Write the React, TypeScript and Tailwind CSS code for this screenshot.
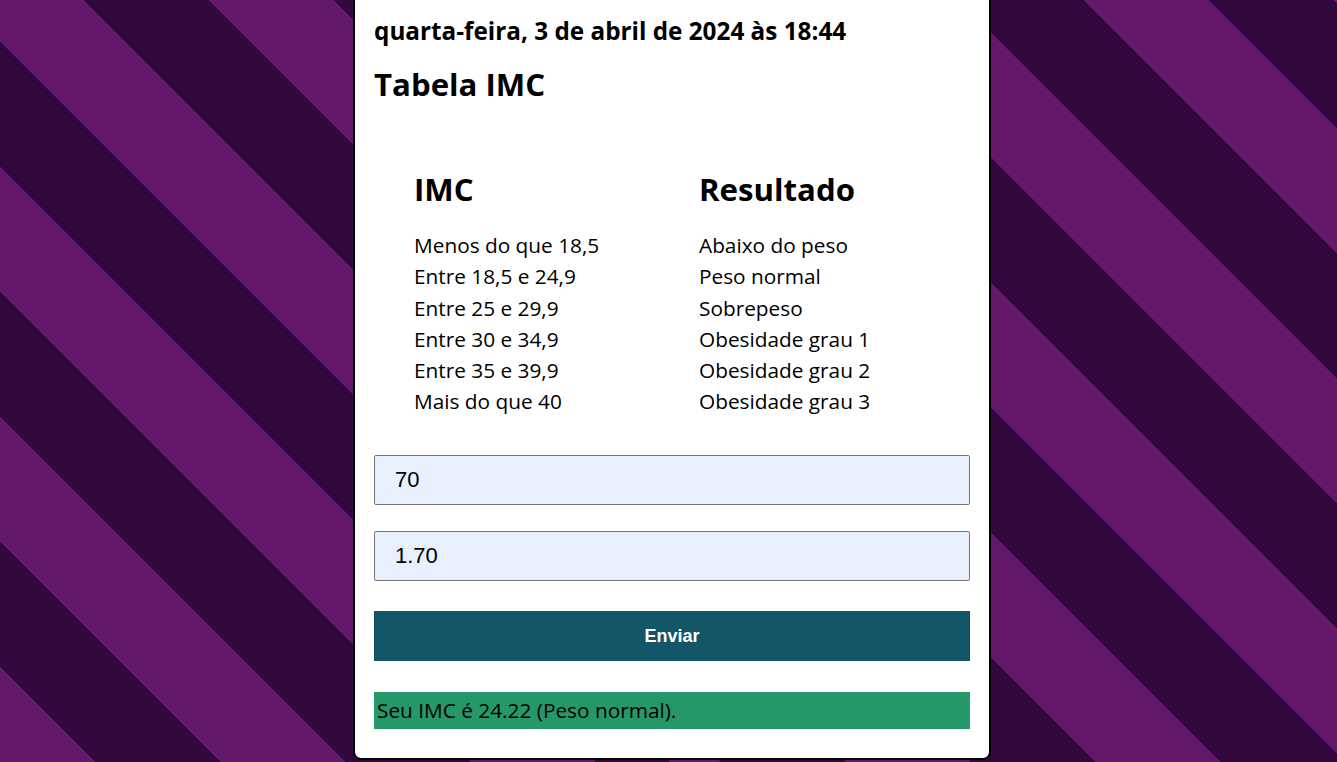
import { useState } from 'react';

type IFaixa = {
	imc: string;
	resultado: string;
};

const faixas: IFaixa[] = [
	{ imc: 'Menos do que 18,5', resultado: 'Abaixo do peso' },
	{ imc: 'Entre 18,5 e 24,9', resultado: 'Peso normal' },
	{ imc: 'Entre 25 e 29,9', resultado: 'Sobrepeso' },
	{ imc: 'Entre 30 e 34,9', resultado: 'Obesidade grau 1' },
	{ imc: 'Entre 35 e 39,9', resultado: 'Obesidade grau 2' },
	{ imc: 'Mais do que 40', resultado: 'Obesidade grau 3' },
];

const classificar = (imc: number) => {
	if (imc < 18.5) return 'Abaixo do peso';
	if (imc < 25) return 'Peso normal';
	if (imc < 30) return 'Sobrepeso';
	if (imc < 35) return 'Obesidade grau 1';
	if (imc < 40) return 'Obesidade grau 2';
	return 'Obesidade grau 3';
};

const App = () => {
	const [peso, setPeso] = useState('70');
	const [altura, setAltura] = useState('1.70');
	const [resultado, setResultado] = useState('Seu IMC é 24.22 (Peso normal).');

	const calcular = (e: React.FormEvent) => {
		e.preventDefault();
		const p = parseFloat(peso);
		const a = parseFloat(altura);
		if (!p || !a) return;
		const imc = p / (a * a);
		setResultado(`Seu IMC é ${imc.toFixed(2)} (${classificar(imc)}).`);
	};

	return (
		<div className="h-screen overflow-hidden flex justify-center pl-[7px] font-['Open_Sans',sans-serif] text-black [background:repeating-linear-gradient(45deg,#631869_0_67.5px,#30083e_67.5px_155.9px,#631869_155.9px_176.78px)_0_0/669px_100%_no-repeat,repeating-linear-gradient(45deg,#631869_0_36.4px,#30083e_36.4px_124.8px,#631869_124.8px_176.78px)_669px_0/668px_100%_no-repeat]">
			<div className="w-[638px] h-fit -mt-2 bg-white border-2 border-black rounded-lg px-[19px] pt-5 pb-[29px] flex flex-col">
				<p className="text-[24.3px] leading-[33px] font-bold">quarta-feira, 3 de abril de 2024 às 18:44</p>
				<h2 className="mt-4 text-[31.2px] leading-[42.5px] font-bold">Tabela IMC</h2>

				<div className="mt-[62px] pl-10 grid grid-cols-[285px_1fr]">
					<h2 className="text-[31.2px] leading-[42.5px] font-bold">IMC</h2>
					<h2 className="text-[31.2px] leading-[42.5px] font-bold">Resultado</h2>
					<div className="col-span-2 h-5"></div>
					{faixas.map((faixa, key) => (
						<div key={key} className="contents text-[20.8px] leading-[31.25px]">
							<span>{faixa.imc}</span>
							<span>{faixa.resultado}</span>
						</div>
					))}
				</div>

				<form onSubmit={calcular} className="flex flex-col">
					<input
						type="text"
						value={peso}
						onChange={(e) => setPeso(e.target.value)}
						className="mt-[37.5px] h-[50px] w-full bg-[#e8f0fe] border border-[#767676] rounded-[2px] pl-5 font-['Liberation_Sans',Arial,sans-serif] text-[22px] text-black outline-none"
					/>
					<input
						type="text"
						value={altura}
						onChange={(e) => setAltura(e.target.value)}
						className="mt-[26px] h-[50px] w-full bg-[#e8f0fe] border border-[#767676] rounded-[2px] pl-5 font-['Liberation_Sans',Arial,sans-serif] text-[22px] text-black outline-none"
					/>
					<button
						type="submit"
						className="mt-[30px] h-[50px] w-full bg-[#125667] text-white font-bold text-[18px] font-['Liberation_Sans',Arial,sans-serif]"
					>
						Enviar
					</button>
				</form>

				<div className="mt-[31px] h-[37px] bg-[#269769] pl-[3px] pt-[5px] text-[20.8px] leading-[27px]">{resultado}</div>
			</div>
		</div>
	);
};

export default App;
